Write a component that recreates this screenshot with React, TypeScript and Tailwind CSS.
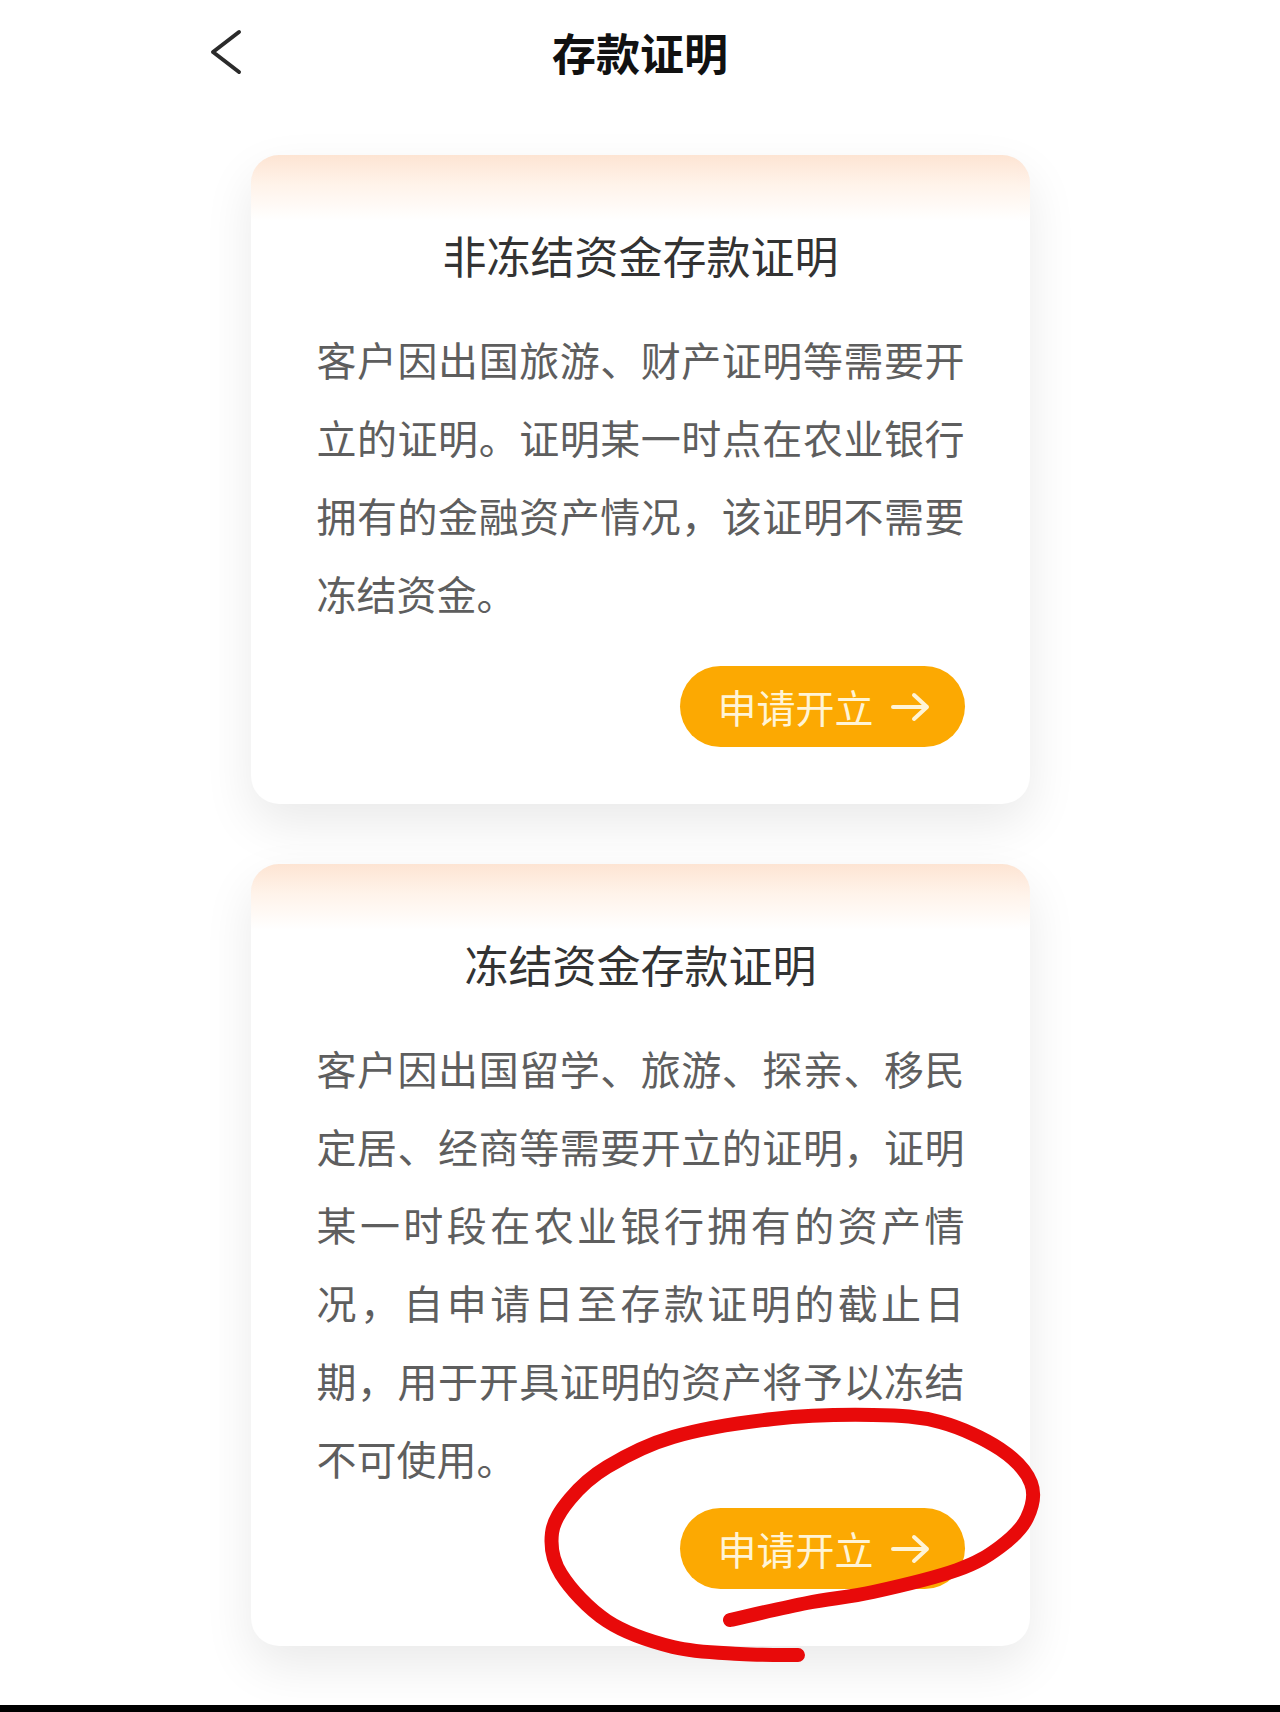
import React from "react";

type Pt = [number, number];

const loop: Pt[] = [
  [798, 1655], [740, 1654], [673, 1647], [607, 1621], [561, 1574], [552, 1533],
  [570, 1499], [607, 1467], [673, 1437], [773, 1419], [873, 1415], [940, 1422],
  [1000, 1449], [1031, 1483], [1027, 1518], [1000, 1547], [957, 1570], [873, 1592],
  [807, 1603], [730, 1620],
];

function smoothPath(p: Pt[]): string {
  let d = `M ${p[0][0]} ${p[0][1]}`;
  for (let i = 0; i < p.length - 1; i++) {
    const p0 = p[i - 1] || p[i];
    const p1 = p[i];
    const p2 = p[i + 1];
    const p3 = p[i + 2] || p2;
    const c1x = p1[0] + (p2[0] - p0[0]) / 6;
    const c1y = p1[1] + (p2[1] - p0[1]) / 6;
    const c2x = p2[0] - (p3[0] - p1[0]) / 6;
    const c2y = p2[1] - (p3[1] - p1[1]) / 6;
    d += ` C ${c1x} ${c1y} ${c2x} ${c2y} ${p2[0]} ${p2[1]}`;
  }
  return d;
}

function ApplyButton({ className }: { className: string }) {
  return (
    <div className={`flex justify-end ${className}`}>
      <button className="flex h-[81px] w-[285px] items-center rounded-full bg-[#fca902] pl-[38px] pr-[35px] text-[39px] leading-none text-[#fff4d6]">
        <span>申请开立</span>
        <svg className="ml-[17px]" width="39" height="30" viewBox="0 0 39 30" fill="none">
          <path d="M2 15 H36 M23 3 L36 15 L23 27" stroke="#fff4d6" strokeWidth="4" strokeLinecap="round" strokeLinejoin="round" />
        </svg>
      </button>
    </div>
  );
}

function Card({ title, body, btnGap }: { title: string; body: string; btnGap: string }) {
  return (
    <div className="w-[779px] rounded-[28px] bg-white bg-[linear-gradient(to_bottom,#fde4d3_0px,#fff3ea_30px,#ffffff_66px)] pb-[57px] pl-[66px] pr-[65px] pt-[72px] shadow-[0_20px_50px_rgba(0,0,0,0.085)]">
      <h2 className="text-center text-[44px] font-normal leading-[56px] text-[#333333]">{title}</h2>
      <p className="mt-[37px] text-justify text-[40px] leading-[78px] text-[#5e5e5e]">{body}</p>
      <ApplyButton className={btnGap} />
    </div>
  );
}

export default function App() {
  return (
    <div className="relative flex h-[1712px] w-[1280px] flex-col overflow-hidden bg-white font-['Noto_Sans_CJK_SC','Noto_Sans',sans-serif]">
      <header className="grid h-[104px] grid-cols-[1fr_auto_1fr] items-center">
        <div className="pl-[209px]">
          <svg width="34" height="46" viewBox="0 0 34 46" fill="none">
            <path d="M30 3 L4 23 L30 43" stroke="#2b2b2b" strokeWidth="4" strokeLinecap="round" strokeLinejoin="round" />
          </svg>
        </div>
        <h1 className="text-[44px] font-bold leading-none text-[#111111]">存款证明</h1>
        <div />
      </header>

      <main className="mt-[51px] flex flex-col items-center gap-[60px]">
        <Card
          title="非冻结资金存款证明"
          body="客户因出国旅游、财产证明等需要开立的证明。证明某一时点在农业银行拥有的金融资产情况，该证明不需要冻结资金。"
          btnGap="mt-[34px]"
        />
        <Card
          title="冻结资金存款证明"
          body="客户因出国留学、旅游、探亲、移民定居、经商等需要开立的证明，证明某一时段在农业银行拥有的资产情况，自申请日至存款证明的截止日期，用于开具证明的资产将予以冻结不可使用。"
          btnGap="mt-[11px]"
        />
      </main>

      <div className="mt-auto h-[7px] w-full bg-black" />

      <svg className="pointer-events-none absolute left-0 top-0" width="1280" height="1712" viewBox="0 0 1280 1712" fill="none">
        <path d={smoothPath(loop)} stroke="#e80a0a" strokeWidth="14" strokeLinecap="round" strokeLinejoin="round" />
      </svg>
    </div>
  );
}
